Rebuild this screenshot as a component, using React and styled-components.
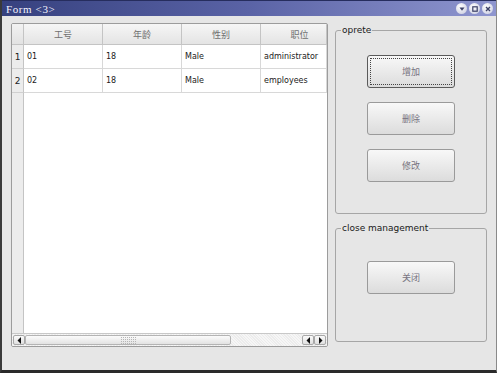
import React from 'react'
import styled, { createGlobalStyle } from 'styled-components'

const Global = createGlobalStyle`
  html, body { margin: 0; padding: 0; background: #e6e6e6; }
  * { box-sizing: border-box; }
`

const Window = styled.div`
  width: 497px;
  height: 373px;
  display: flex;
  flex-direction: column;
  background: #e6e6e6;
  border-left: 2px solid #3a3a3a;
  border-bottom: 3px solid #2a2a2a;
  border-right: 1px solid #8a8a8a;
  font-family: "DejaVu Sans", "Noto Sans CJK SC", sans-serif;
`

const TitleBar = styled.div`
  height: 16px;
  flex: none;
  display: flex;
  align-items: center;
  justify-content: space-between;
  padding: 0 3px 0 4px;
  background: linear-gradient(90deg, #36417f 0%, #5a63a6 50%, #8f96cf 100%);
  border-top: 1px solid #262d5e;
  color: #f4f4ff;
  font-family: "Liberation Serif", "DejaVu Serif", serif;
  font-size: 11px;
  letter-spacing: 0.6px;
`

const TitleButtons = styled.div`
  display: flex;
  gap: 2px;
`

const TitleBtn = styled.span`
  width: 11px;
  height: 11px;
  border-radius: 50%;
  background: radial-gradient(circle at 40% 35%, #ffffff, #c4c7dc);
  display: flex;
  align-items: center;
  justify-content: center;
`

const Body = styled.div`
  flex: 1;
  display: flex;
  padding: 7px 9px 0 9px;
  gap: 7px;
`

const TableFrame = styled.div`
  width: 317px;
  height: 324px;
  flex: none;
  display: flex;
  flex-direction: column;
  border: 1px solid #9c9c9c;
  border-radius: 2px;
  background: #fff;
  overflow: hidden;
`

const TableArea = styled.div`
  flex: 1;
  display: grid;
  grid-template-columns: 12px 79px 79px 79px 66px;
  grid-template-rows: 21px 24px 24px 1fr;
  overflow: hidden;
`

const Corner = styled.div`
  background: linear-gradient(#f2f2f2, #e2e2e2);
  border-right: 1px solid #c4c4c4;
  border-bottom: 1px solid #c4c4c4;
`

const HeadCell = styled.div`
  background: linear-gradient(#f6f6f6, #e4e4e4);
  border-right: 1px solid #c4c4c4;
  border-bottom: 1px solid #c4c4c4;
  color: #707070;
  font-size: 9px;
  display: flex;
  align-items: center;
  justify-content: center;
  padding-left: ${p => p.$shift || 0}px;
  white-space: nowrap;
  overflow: hidden;
`

const RowHead = styled.div`
  background: #ececec;
  border-right: 1px solid #c4c4c4;
  border-bottom: 1px solid #d0d0d0;
  color: #222;
  font-size: 9px;
  display: flex;
  align-items: center;
  justify-content: center;
`

const Cell = styled.div`
  border-right: 1px solid #d8d8d8;
  border-bottom: 1px solid #d8d8d8;
  color: #1a1a1a;
  font-size: 8px;
  display: flex;
  align-items: center;
  padding-left: 3px;
  white-space: nowrap;
  overflow: hidden;
`

const RowHeadFill = styled.div`
  background: #ececec;
  border-right: 1px solid #c4c4c4;
`

const Blank = styled.div`
  grid-column: span 4;
  background: #fff;
`

const ScrollBar = styled.div`
  height: 13px;
  flex: none;
  display: flex;
  align-items: stretch;
  background: repeating-linear-gradient(45deg, #ececec 0 1px, #f6f6f6 1px 2px);
  border-top: 1px solid #c8c8c8;
  padding: 1px;
`

const ArrowBtn = styled.div`
  width: 12px;
  flex: none;
  display: flex;
  align-items: center;
  justify-content: center;
  border: 1px solid #a8a8a8;
  border-radius: 2px;
  background: linear-gradient(#fafafa, #e0e0e0);
`

const Handle = styled.div`
  width: 206px;
  flex: none;
  display: flex;
  align-items: center;
  justify-content: center;
  border: 1px solid #b4b4b4;
  border-radius: 2px;
  background: linear-gradient(#fbfbfb, #e2e2e2);
`

const Grip = styled.div`
  width: 15px;
  height: 7px;
  background-image: radial-gradient(circle at 0.5px 0.5px, #b6b6b6 0.5px, transparent 0.6px);
  background-size: 2px 2px;
`

const TrackGap = styled.div`
  flex: 1;
`

const Side = styled.div`
  width: 152px;
  display: flex;
  flex-direction: column;
  padding-top: 7px;
  gap: 14px;
`

const Group = styled.div`
  position: relative;
  height: ${p => p.$h}px;
  border: 1px solid #a6a6a6;
  border-radius: 3px;
  display: flex;
  flex-direction: column;
  align-items: center;
  padding-top: ${p => p.$pt}px;
  gap: 14px;
`

const GroupTitle = styled.span`
  position: absolute;
  top: -7px;
  left: 5px;
  padding: 0 1px;
  background: #e6e6e6;
  color: #1a1a1a;
  font-size: 9px;
  line-height: 12px;
`

const Button = styled.button`
  width: 88px;
  height: 33px;
  flex: none;
  border: 1px solid ${p => (p.$focus ? '#5a5a5a' : '#9a9a9a')};
  border-radius: 3px;
  background: linear-gradient(#f8f8f8, #dcdcdc);
  color: #77737f;
  font-family: "Noto Sans CJK SC", sans-serif;
  font-size: 9px;
  padding: 0;
  outline: ${p => (p.$focus ? '1px dotted #444' : 'none')};
  outline-offset: -4px;
`

const Arrow = ({ dir }) => (
  <svg width="5" height="7" viewBox="0 0 5 7">
    {dir === 'left'
      ? <polygon points="4,0 4,7 0.5,3.5" fill="#111" />
      : <polygon points="1,0 1,7 4.5,3.5" fill="#111" />}
  </svg>
)

const rows = [
  ['1', '01', '18', 'Male', 'administrator'],
  ['2', '02', '18', 'Male', 'employees'],
]

export default function App() {
  return (
    <>
      <Global />
      <Window>
        <TitleBar>
          <span>Form &lt;3&gt;</span>
          <TitleButtons>
            <TitleBtn>
              <svg width="6" height="6" viewBox="0 0 6 6"><polygon points="0.5,1.5 5.5,1.5 3,4.8" fill="#3a3f66" /></svg>
            </TitleBtn>
            <TitleBtn>
              <svg width="6" height="6" viewBox="0 0 6 6"><rect x="0.8" y="0.8" width="4.4" height="4.4" fill="none" stroke="#3a3f66" strokeWidth="1.2" /></svg>
            </TitleBtn>
            <TitleBtn>
              <svg width="6" height="6" viewBox="0 0 6 6"><path d="M1 1L5 5M5 1L1 5" stroke="#3a3f66" strokeWidth="1.4" /></svg>
            </TitleBtn>
          </TitleButtons>
        </TitleBar>
        <Body>
          <TableFrame>
            <TableArea>
              <Corner />
              <HeadCell>工号</HeadCell>
              <HeadCell>年龄</HeadCell>
              <HeadCell>性别</HeadCell>
              <HeadCell $shift={12}>职位</HeadCell>
              {rows.map(r => (
                <React.Fragment key={r[0]}>
                  <RowHead>{r[0]}</RowHead>
                  <Cell>{r[1]}</Cell>
                  <Cell>{r[2]}</Cell>
                  <Cell>{r[3]}</Cell>
                  <Cell>{r[4]}</Cell>
                </React.Fragment>
              ))}
              <RowHeadFill />
              <Blank />
            </TableArea>
            <ScrollBar>
              <ArrowBtn><Arrow dir="left" /></ArrowBtn>
              <Handle><Grip /></Handle>
              <TrackGap />
              <ArrowBtn><Arrow dir="left" /></ArrowBtn>
              <ArrowBtn><Arrow dir="right" /></ArrowBtn>
            </ScrollBar>
          </TableFrame>
          <Side>
            <Group $h={184} $pt={24}>
              <GroupTitle>oprete</GroupTitle>
              <Button $focus>增加</Button>
              <Button>删除</Button>
              <Button>修改</Button>
            </Group>
            <Group $h={114} $pt={32}>
              <GroupTitle>close management</GroupTitle>
              <Button>关闭</Button>
            </Group>
          </Side>
        </Body>
      </Window>
    </>
  )
}
